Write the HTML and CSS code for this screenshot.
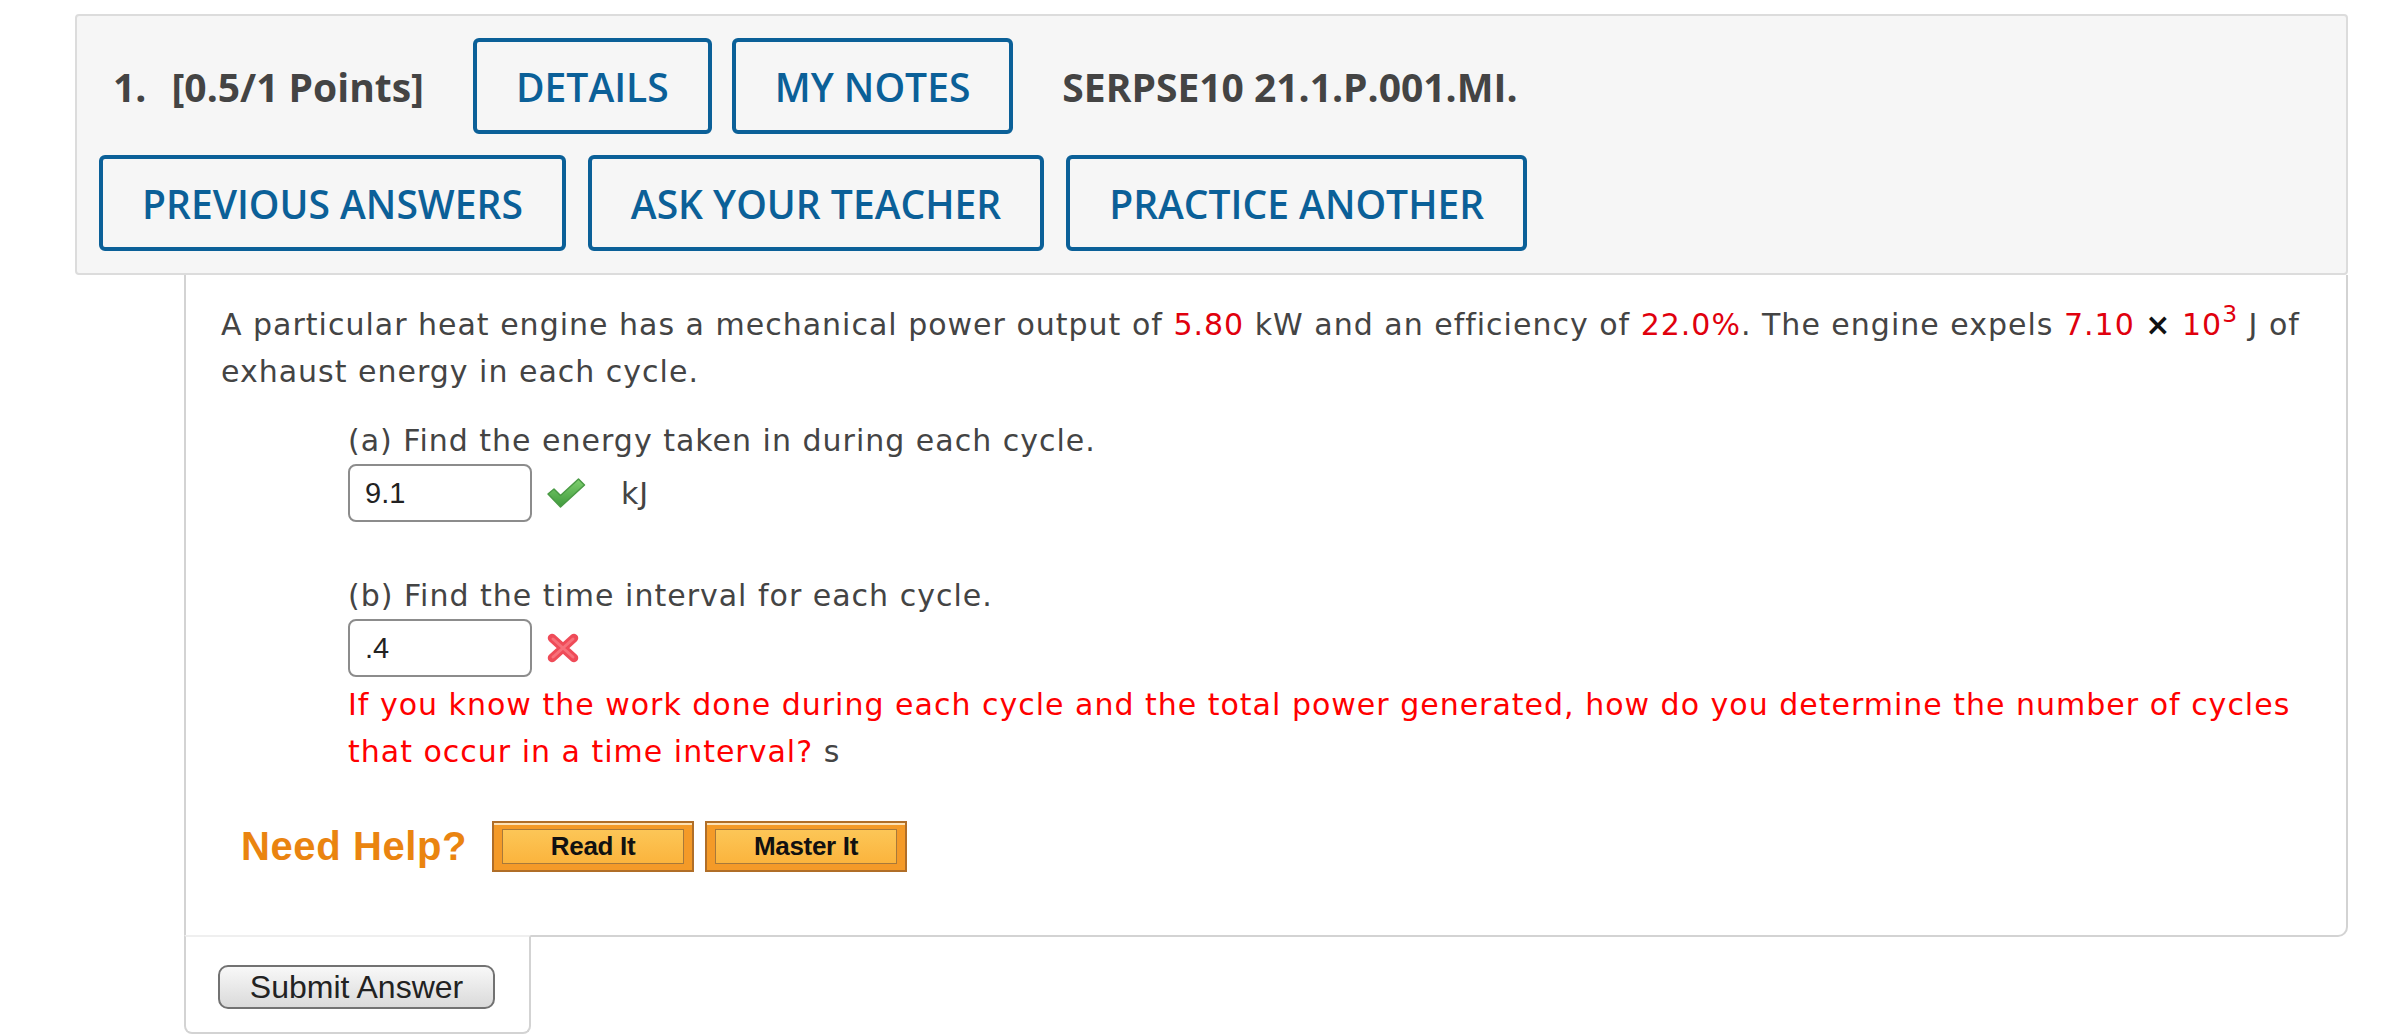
FILE: index.html
```html
<!DOCTYPE html>
<html>
<head>
<meta charset="utf-8">
<title>Question 1</title>
<link rel="stylesheet" href="styles.css">
</head>
<body>
<div class="page">
  <div class="qhead">
    <div class="row">
      <span class="qnum">1.</span>
      <span class="points">[0.5/1 Points]</span>
      <span class="hbtn details">DETAILS</span>
      <span class="hbtn">MY NOTES</span>
      <span class="code">SERPSE10 21.1.P.001.MI.</span>
    </div>
    <div class="row row2">
      <span class="hbtn">PREVIOUS ANSWERS</span>
      <span class="hbtn">ASK YOUR TEACHER</span>
      <span class="hbtn">PRACTICE ANOTHER</span>
    </div>
  </div>

  <div class="qbody">
    <p class="stem">A particular heat engine has a mechanical power output of <span class="val">5.80</span> kW and an efficiency of <span class="val">22.0%</span>. The engine expels <span class="val">7.10</span> <b class="times">×</b> <span class="val">10<sup>3</sup></span> J of<br>exhaust energy in each cycle.</p>

    <div class="part part-a">
      <div class="plabel">(a) Find the energy taken in during each cycle.</div>
      <div class="answer">
        <span class="field">9.1</span>
        <svg class="mark check" viewBox="0 0 40 32" width="40" height="32">
          <defs>
            <linearGradient id="g" x1="0" y1="0" x2="0" y2="1">
              <stop offset="0" stop-color="#7fcf6f"/>
              <stop offset="1" stop-color="#3f9a3c"/>
            </linearGradient>
          </defs>
          <path d="M2 17 L8 12 L14.5 18.5 L32.5 2 L38.5 8 L14.5 30 Z" fill="url(#g)" stroke="#4a9a45" stroke-width="1.5" stroke-linejoin="round"/>
        </svg>
        <span class="unit">kJ</span>
      </div>
    </div>

    <div class="part part-b">
      <div class="plabel">(b) Find the time interval for each cycle.</div>
      <div class="answer">
        <span class="field">.4</span>
        <svg class="mark cross" viewBox="0 0 34 30" width="34" height="30">
          <path d="M6 5 L28 25 M28 5 L6 25" stroke="#ef4b58" stroke-width="8.5" stroke-linecap="round"/>
          <path d="M7 6 L27 24 M27 6 L7 24" stroke="#f7707a" stroke-width="3" stroke-linecap="round"/>
        </svg>
      </div>
      <div class="hint"><span class="hint-text">If you know the work done during each cycle and the total power generated, how do you determine the number of cycles<br>that occur in a time interval?</span> s</div>
    </div>

    <div class="help">
      <span class="needhelp">Need Help?</span>
      <span class="obtn"><span class="obtn-in">Read It</span></span>
      <span class="obtn"><span class="obtn-in">Master It</span></span>
    </div>
  </div>

  <div class="submit-tab">
    <span class="submit">Submit Answer</span>
  </div>
</div>
</body>
</html>
```

FILE: styles.css
```css
* {
  box-sizing: border-box;
}

body {
  margin: 0;
  background: #ffffff;
}

.page {
  width: 2348px;
  padding: 14px 0 0 75px;
}

/* ---------- header panel ---------- */
.qhead {
  background: #f6f6f6;
  border: 2px solid #dcdcdc;
  border-radius: 4px;
  padding: 22px;
  font-family: "Open Sans", "Liberation Sans", sans-serif;
  color: #444444;
}

.row {
  display: flex;
  align-items: center;
}

.row2 {
  margin-top: 21px;
}

.qnum,
.points,
.code {
  font-weight: 700;
  font-size: 39px;
  white-space: nowrap;
}

.qnum {
  margin-left: 14px;
}

.points {
  margin-left: 25px;
}

.code {
  margin-left: 49px;
}

.hbtn {
  display: flex;
  align-items: center;
  height: 96px;
  padding: 0 39px;
  border: 4px solid #0b6098;
  border-radius: 6px;
  background: #f6f6f6;
  color: #0b6098;
  font-weight: 600;
  font-size: 39px;
  white-space: nowrap;
}

.details {
  margin-left: 49px;
}

.hbtn + .hbtn {
  margin-left: 20px;
}

.row2 .hbtn + .hbtn {
  margin-left: 22px;
}

/* ---------- body panel ---------- */
.qbody {
  margin-left: 109px;
  background: #ffffff;
  border: 2px solid #d3d3d3;
  border-top: 0;
  border-radius: 0 0 10px 0;
  padding: 26px 20px 63px 35px;
  font-family: "DejaVu Sans", Verdana, sans-serif;
  font-size: 30px;
  letter-spacing: 1px;
  line-height: 47px;
  color: #444444;
}

.stem {
  margin: 0;
  white-space: nowrap;
}

.val {
  color: #e0000d;
}

.stem sup {
  font-size: 0.78em;
  line-height: 0;
  vertical-align: 0.55em;
}

.times {
  color: #111111;
}

.part {
  margin-left: 127px;
}

.part-a {
  margin-top: 22px;
}

.part-b {
  margin-top: 50px;
}

.answer {
  display: flex;
  align-items: center;
  height: 58px;
}

.field {
  display: block;
  width: 184px;
  height: 58px;
  border: 2px solid #8c8c8c;
  border-radius: 8px;
  background: #ffffff;
  padding-left: 15px;
  font-family: "Liberation Sans", Arial, sans-serif;
  font-size: 29px;
  letter-spacing: 0;
  line-height: 54px;
  color: #222222;
}

.mark {
  display: block;
  margin-left: 14px;
}

.unit {
  margin-left: 35px;
}

.hint {
  margin-top: 4px;
  white-space: nowrap;
}

.hint-text {
  color: #ff0000;
}

.help {
  display: flex;
  align-items: center;
  height: 51px;
  margin-top: 46px;
  margin-left: 20px;
}

.needhelp {
  font-family: "Liberation Sans", Arial, sans-serif;
  font-weight: 700;
  font-size: 40px;
  letter-spacing: 0.6px;
  color: #ea8410;
}

.obtn {
  display: block;
  width: 202px;
  height: 51px;
  margin-left: 11px;
  padding: 6px 8px 6px 8px;
  border: 2px solid #b06e28;
  background: #f49a28;
  box-shadow: inset 0 2px 0 #fde2b6;
}

.needhelp + .obtn {
  margin-left: 25px;
}

.obtn-in {
  display: flex;
  align-items: center;
  justify-content: center;
  height: 100%;
  border: 1px solid #a8793a;
  background: linear-gradient(#fcc657, #fbb43d);
  font-family: "Liberation Sans", Arial, sans-serif;
  font-weight: 700;
  font-size: 26px;
  letter-spacing: -0.3px;
  color: #111111;
}

/* ---------- submit tab ---------- */
.submit-tab {
  width: 347px;
  margin-left: 109px;
  margin-top: -2px;
  background: #ffffff;
  border: 2px solid #d3d3d3;
  border-top-color: #efefef;
  border-radius: 0 0 8px 8px;
  padding: 28px 0 23px 32px;
}

.submit {
  display: flex;
  align-items: center;
  justify-content: center;
  width: 277px;
  height: 44px;
  border: 2px solid #727272;
  border-radius: 10px;
  background: linear-gradient(#f8f8f8, #dadada);
  font-family: "Liberation Sans", Arial, sans-serif;
  font-size: 32px;
  color: #222222;
}
```
